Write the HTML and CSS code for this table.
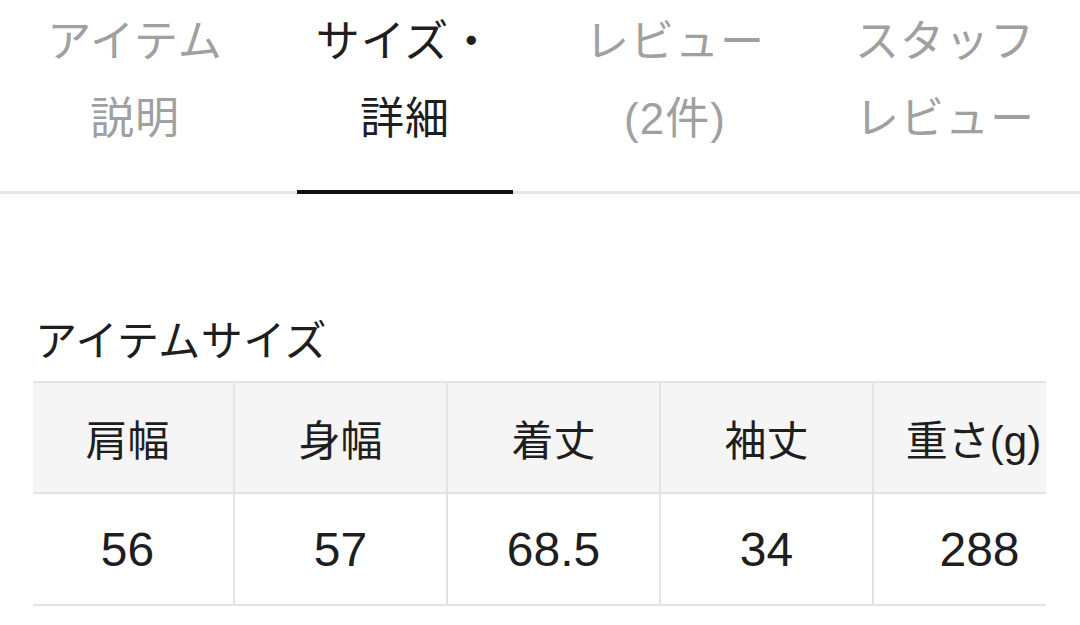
FILE: index.html
```html
<!DOCTYPE html>
<html lang="ja">
<head>
<meta charset="utf-8">
<title>サイズ・詳細</title>
<link rel="stylesheet" href="styles.css">
</head>
<body>
<nav class="tabs">
  <div class="tab">アイテム<br>説明</div>
  <div class="tab active">サイズ・<br>詳細</div>
  <div class="tab">レビュー<br>(2件)</div>
  <div class="tab">スタッフ<br>レビュー</div>
</nav>
<section class="size-section">
  <h2 class="size-title">アイテムサイズ</h2>
  <div class="table-scroll">
    <table class="size-table">
      <thead>
        <tr><th>肩幅</th><th>身幅</th><th>着丈</th><th>袖丈</th><th class="weight">重さ(g)</th></tr>
      </thead>
      <tbody>
        <tr><td>56</td><td>57</td><td>68.5</td><td>34</td><td>288</td></tr>
      </tbody>
    </table>
  </div>
</section>
</body>
</html>
```
FILE: styles.css
```css
* { box-sizing: border-box; }
html, body { margin: 0; padding: 0; background: #fff; }
body {
  font-family: "Liberation Sans", "Noto Sans CJK JP", sans-serif;
  color: #222;
  width: 1080px;
  height: 625px;
  overflow: hidden;
}
.tabs {
  display: flex;
  border-bottom: 3px solid #e6e6e6;
}
.tab {
  flex: 1;
  position: relative;
  height: 191px;
  padding-top: 3px;
  text-align: center;
  font-size: 44px;
  letter-spacing: 1px;
  line-height: 77px;
  color: #a0a0a0;
}
.tab.active { color: #1e1e1e; }
.tab.active::after {
  content: "";
  position: absolute;
  left: 27px;
  right: 27px;
  bottom: -3px;
  height: 4px;
  background: #111;
}
.size-section {
  padding: 123px 34px 0 33px;
}
.size-title {
  margin: 0 0 14px 2px;
  font-size: 42px;
  letter-spacing: 0.5px;
  font-weight: 400;
  line-height: 50px;
  color: #1e1e1e;
}
.table-scroll {
  overflow: hidden;
  width: 1013px;
}
.size-table {
  margin-left: -13px;
  border-collapse: collapse;
  table-layout: fixed;
  width: 1065px;
}
.size-table th,
.size-table td {
  width: 213px;
  border: 2px solid #e3e3e3;
  text-align: center;
  color: #1e1e1e;
  font-weight: 400;
  padding: 0;
}
.size-table th {
  height: 111px;
  background: #f5f5f5;
  font-size: 42px;
}
.size-table th.weight { padding-right: 12px; }
.size-table td {
  height: 112px;
  font-size: 48px;
}
```
